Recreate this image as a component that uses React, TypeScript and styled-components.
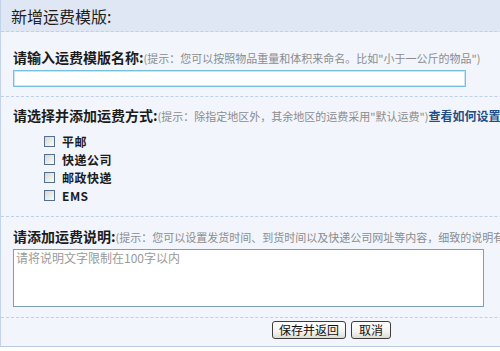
import styled, { createGlobalStyle } from "styled-components";

const GlobalStyle = createGlobalStyle`
  html, body {
    margin: 0;
    padding: 0;
    background: #ffffff;
    overflow: hidden;
  }
  body {
    font-family: "Noto Sans CJK SC", "Liberation Sans", sans-serif;
    color: #222;
  }
`;

const Page = styled.div`
  width: 500px;
  height: 351px;
  overflow: hidden;
`;

const Panel = styled.div`
  width: 662px;
  background: #f2f5fc;
  border-left: 1px solid #c3d3ea;
  border-bottom: 1px solid #b7c9e4;
  box-sizing: border-box;
`;

const Header = styled.div`
  height: 32px;
  display: flex;
  align-items: center;
  padding-left: 10px;
  background: #dfe7f5;
  border-bottom: 1px dashed #bcd0ea;
  font-size: 16px;
  color: #1e1e1e;
  line-height: 18px;
  padding-top: 1px;
  box-sizing: border-box;
`;

const Section = styled.div<{ $top: number; $bottom: number }>`
  padding: ${(p) => p.$top}px 12px ${(p) => p.$bottom}px;
  border-bottom: 1px dashed #bcd0ea;
`;

const Label = styled.div`
  white-space: nowrap;
  overflow: hidden;
  height: 18px;
  line-height: 18px;
  font-size: 14px;
  font-weight: 700;
  color: #1c1c1c;

  span {
    font-size: 11px;
    font-weight: 400;
    color: #8c8c8c;
  }

  a {
    font-size: 12px;
    font-weight: 700;
    color: #1f4f86;
    text-decoration: none;
  }
`;

const NameInput = styled.input`
  display: block;
  margin-top: 4px;
  width: 453px;
  height: 17px;
  box-sizing: border-box;
  border: 1px solid #74bfe3;
  outline: 1px solid #c9e6f5;
  outline-offset: -2px;
  background: #fff;
  padding: 0 2px;
`;

const OptionList = styled.div`
  margin-top: 8px;
  padding-left: 31px;
  display: flex;
  flex-direction: column;
`;

const Option = styled.label`
  display: flex;
  align-items: center;
  gap: 7px;
  height: 18px;
  font-size: 12px;
  font-weight: 700;
  letter-spacing: 0.5px;
  color: #1c1c1c;
`;

const Check = styled.input`
  appearance: none;
  margin: 0;
  width: 11px;
  height: 11px;
  box-sizing: border-box;
  border: 1px solid #54708f;
  background: linear-gradient(135deg, #d6d6d2 0%, #f1f1ee 70%, #fbfbfa 100%);
`;

const Notes = styled.textarea`
  display: block;
  margin-top: 4px;
  width: 471px;
  height: 58px;
  box-sizing: border-box;
  border: 1px solid #7f9db9;
  background: #fff;
  padding: 1px 2px;
  resize: none;
  font-family: "Noto Sans CJK SC", "Liberation Sans", sans-serif;
  font-size: 12px;
  line-height: 14px;

  &::placeholder {
    color: #9a9a9a;
  }
`;

const Actions = styled.div`
  display: flex;
  justify-content: center;
  gap: 5px;
  padding: 3px 0 7px;
`;

const Button = styled.button<{ $w: number }>`
  width: ${(p) => p.$w}px;
  height: 18px;
  padding: 0;
  border: 1px solid #3d3d3d;
  border-radius: 3px;
  background: linear-gradient(#ffffff 0%, #f3f3ef 60%, #dedbd2 100%);
  font-family: "Noto Sans CJK SC", "Liberation Sans", sans-serif;
  font-size: 12px;
  line-height: 16px;
  color: #111;
`;

const shipping = ["平邮", "快递公司", "邮政快递", "EMS"];

export default function App() {
  return (
    <Page>
      <GlobalStyle />
      <Panel>
        <Header>新增运费模版:</Header>
        <Section $top={16} $bottom={9}>
          <Label>
            请输入运费模版名称:<span>(提示：您可以按照物品重量和体积来命名。比如"小于一公斤的物品")</span>
          </Label>
          <NameInput type="text" />
        </Section>
        <Section $top={9} $bottom={12}>
          <Label>
            请选择并添加运费方式:<span>(提示：除指定地区外，其余地区的运费采用"默认运费")</span>
            <a href="#">查看如何设置运费</a>
          </Label>
          <OptionList>
            {shipping.map((s) => (
              <Option key={s}>
                <Check type="checkbox" />
                {s}
              </Option>
            ))}
          </OptionList>
        </Section>
        <Section $top={10} $bottom={10}>
          <Label>
            请添加运费说明:<span>(提示：您可以设置发货时间、到货时间以及快递公司网址等内容，细致的说明有助于买家了解)</span>
          </Label>
          <Notes placeholder="请将说明文字限制在100字以内" />
        </Section>
        <Actions>
          <Button $w={74}>保存并返回</Button>
          <Button $w={40}>取消</Button>
        </Actions>
      </Panel>
    </Page>
  );
}
